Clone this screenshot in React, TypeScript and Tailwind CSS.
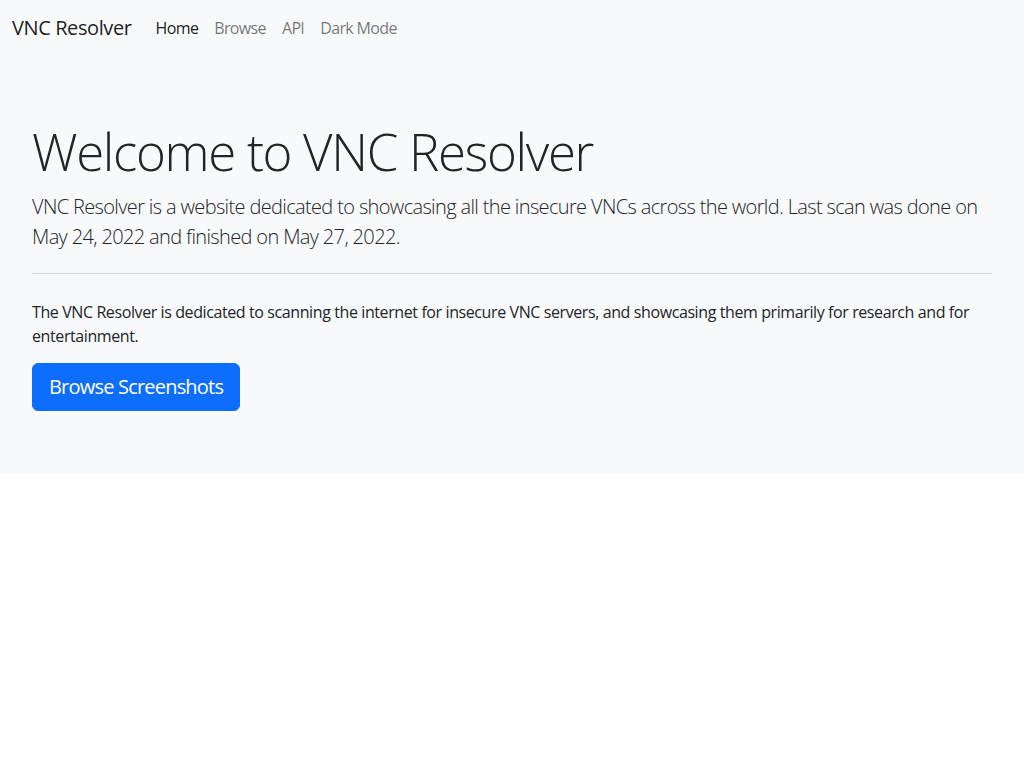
export default function App() {
  const links = [
    { name: "Home", active: true },
    { name: "Browse", active: false },
    { name: "API", active: false },
    { name: "Dark Mode", active: false },
  ];

  return (
    <div className="min-h-screen bg-white font-['Segoe_UI','Open_Sans',sans-serif] tracking-[-0.025em] text-[#212529]">
      {/* Navbar + jumbotron share the light background */}
      <div className="bg-[#f8f9fa]">
        <nav className="flex items-center h-14 px-3">
          <a href="#" className="text-[20px] text-black/90 mr-4 leading-[30px]">
            VNC Resolver
          </a>
          <ul className="flex tracking-[-0.04em]">
            {links.map((link) => (
              <li key={link.name}>
                <a
                  href="#"
                  className={`block px-2 py-2 text-[16px] leading-6 ${link.active ? "text-black/90" : "text-black/55"}`}
                >
                  {link.name}
                </a>
              </li>
            ))}
          </ul>
        </nav>

        <div className="px-8 pt-[65px] pb-[63px]">
          <h1 className="text-[51px] font-light leading-[1.2] tracking-[-0.026em] mb-[10px]">Welcome to VNC Resolver</h1>
          <p className="text-[20px] font-light leading-[30px] tracking-[-0.032em]">
            VNC Resolver is a website dedicated to showcasing all the insecure VNCs across the world. Last scan was done on May 24, 2022 and finished on May 27, 2022.
          </p>
          <hr className="mt-[21px] mb-[26px] border-t border-[#d3d4d5]" />
          <p className="text-[16px] leading-6 mb-[15px]">
            The VNC Resolver is dedicated to scanning the internet for insecure VNC servers, and showcasing them primarily for research and for entertainment.
          </p>
          <a
            href="#"
            className="inline-block bg-[#0d6efd] text-white text-[20px] leading-[30px] tracking-[-0.04em] px-4 py-2 rounded-md border border-[#0d6efd]"
          >
            Browse Screenshots
          </a>
        </div>
      </div>
    </div>
  );
}
